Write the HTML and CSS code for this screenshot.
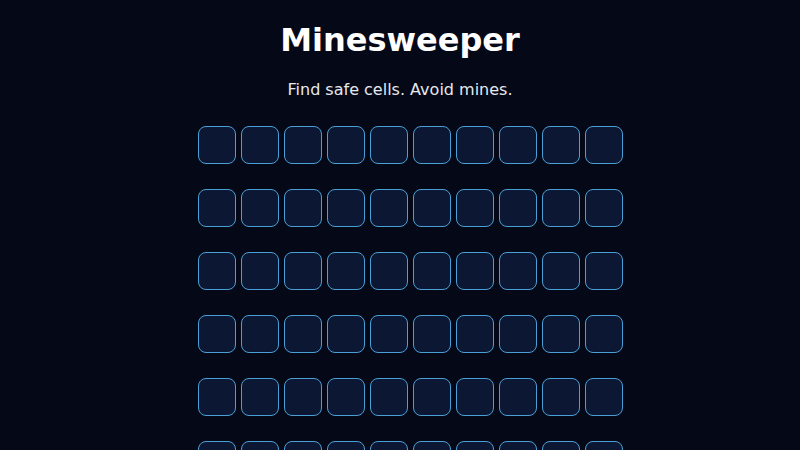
FILE: index.html
```html
<!DOCTYPE html>
<html>
<head>
<meta charset="utf-8">
<link rel="stylesheet" href="styles.css">
</head>
<body>
<h1 class="title">Minesweeper</h1>
<p class="subtitle">Find safe cells. Avoid mines.</p>
<div class="board">
<button class="cell"></button><button class="cell"></button><button class="cell"></button><button class="cell"></button><button class="cell"></button><button class="cell"></button><button class="cell"></button><button class="cell"></button><button class="cell"></button><button class="cell"></button>
<button class="cell"></button><button class="cell"></button><button class="cell"></button><button class="cell"></button><button class="cell"></button><button class="cell"></button><button class="cell"></button><button class="cell"></button><button class="cell"></button><button class="cell"></button>
<button class="cell"></button><button class="cell"></button><button class="cell"></button><button class="cell"></button><button class="cell"></button><button class="cell"></button><button class="cell"></button><button class="cell"></button><button class="cell"></button><button class="cell"></button>
<button class="cell"></button><button class="cell"></button><button class="cell"></button><button class="cell"></button><button class="cell"></button><button class="cell"></button><button class="cell"></button><button class="cell"></button><button class="cell"></button><button class="cell"></button>
<button class="cell"></button><button class="cell"></button><button class="cell"></button><button class="cell"></button><button class="cell"></button><button class="cell"></button><button class="cell"></button><button class="cell"></button><button class="cell"></button><button class="cell"></button>
<button class="cell"></button><button class="cell"></button><button class="cell"></button><button class="cell"></button><button class="cell"></button><button class="cell"></button><button class="cell"></button><button class="cell"></button><button class="cell"></button><button class="cell"></button>
</div>
</body>
</html>
```
FILE: styles.css
```css
html, body {
  background: #050816;
}
body {
  margin: 8px;
  font-family: "DejaVu Sans", sans-serif;
  color: #f1f3f8;
  text-align: center;
}
.title {
  font-size: 32px;
  font-weight: bold;
  margin: 14px 0 21px;
  line-height: 37px;
  color: #ffffff;
}
.subtitle {
  font-size: 16px;
  line-height: 19px;
  margin: 21px 0 0;
  color: #e6e8ee;
}
.board {
  display: grid;
  grid-template-columns: repeat(10, 38px);
  column-gap: 5px;
  row-gap: 25px;
  justify-content: center;
  padding-left: 21px;
  margin-top: 27px;
}
.cell {
  width: 38px;
  height: 38px;
  padding: 0;
  margin: 0;
  background: #0c1734;
  border: 1px solid #4aa0d6;
  border-radius: 8px;
}
```
